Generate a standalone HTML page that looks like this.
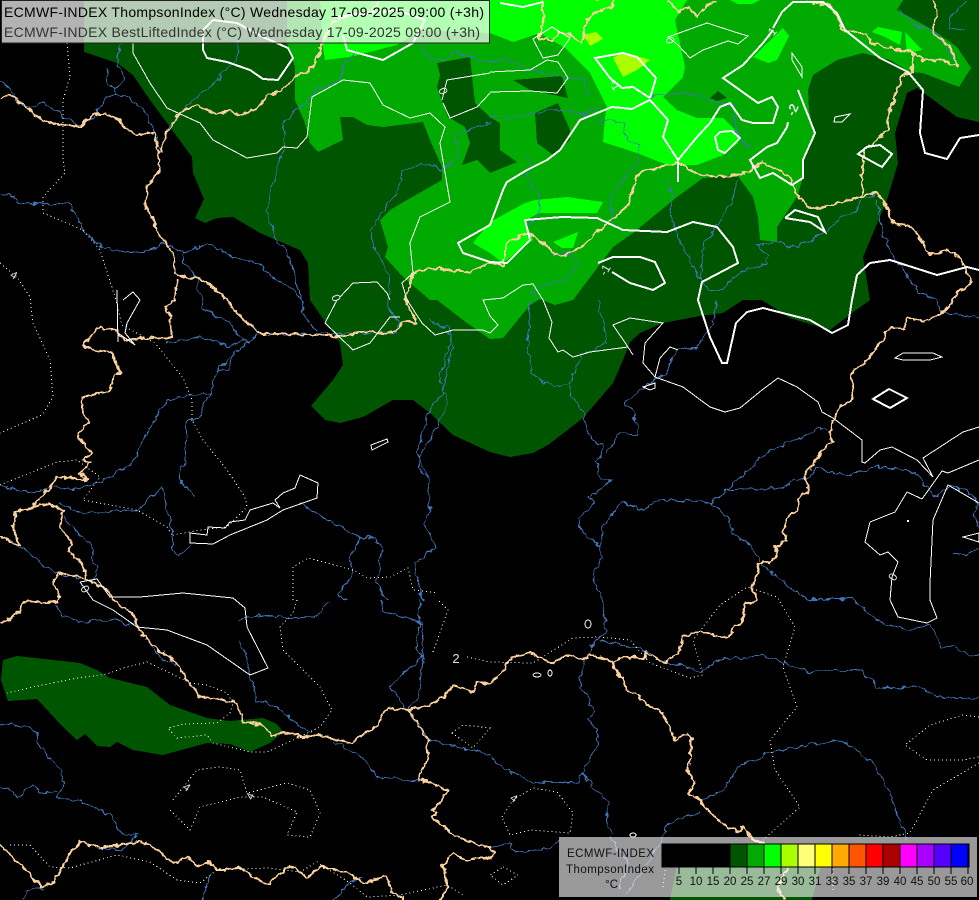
<!DOCTYPE html>
<html lang="en"><head><meta charset="utf-8"><title>ECMWF-INDEX ThompsonIndex</title>
<style>html,body{margin:0;padding:0;background:#000;width:979px;height:900px;overflow:hidden}svg{display:block}</style></head>
<body>
<svg xmlns="http://www.w3.org/2000/svg" width="979" height="900" viewBox="0 0 979 900" font-family="'Liberation Sans',sans-serif">
<defs>
<filter id="wr" filterUnits="userSpaceOnUse" x="0" y="0" width="979" height="900" color-interpolation-filters="sRGB">
<feTurbulence type="fractalNoise" baseFrequency="0.13" numOctaves="2" seed="4" result="n"/>
<feDisplacementMap in="SourceGraphic" in2="n" scale="7" xChannelSelector="R" yChannelSelector="G"/>
</filter>
<filter id="wb" filterUnits="userSpaceOnUse" x="0" y="0" width="979" height="900" color-interpolation-filters="sRGB">
<feTurbulence type="fractalNoise" baseFrequency="0.16" numOctaves="2" seed="9" result="n"/>
<feDisplacementMap in="SourceGraphic" in2="n" scale="6" xChannelSelector="R" yChannelSelector="G"/>
</filter>
</defs>
<rect width="979" height="900" fill="#000"/>
<g shape-rendering="crispEdges">
<g fill="#005500">
<polygon points="84,0 84,52 117,63 133,75 150,100 167,123 192,157 193,173 204,199 195,218 205,223 217,218 233,217 260,233 300,250 308,263 310,300 340,343 343,365 333,380 311,406 325,420 340,423 363,417 393,400 413,400 430,413 453,435 490,452 510,457 533,453 548,445 583,418 613,383 623,360 630,342 640,333 663,323 700,316 723,313 743,300 762,300 790,318 830,330 852,313 870,300 863,257 887,200 898,163 895,133 907,93 917,88 957,117 979,122 979,0"/>
<polygon points="3,660 17,656 80,663 97,670 110,678 147,687 170,705 207,718 230,721 263,718 277,724 283,732 270,743 250,752 230,744 207,743 163,755 133,750 117,742 110,747 97,746 85,734 77,740 63,727 37,699 8,701 1,680"/>
<polygon points="680,850 825,850 812,900 670,900"/>
</g>
<polygon fill="#00aa00" points="287,0 287,43 295,67 295,100 305,123 310,143 318,152 343,140 340,117 353,117 367,125 383,127 423,122 430,140 442,167 442,180 407,200 390,210 380,220 388,247 385,257 403,277 430,300 437,300 467,323 490,339 503,338 530,305 540,299 555,305 573,300 613,247 633,233 677,197 703,178 737,175 753,197 758,217 760,240 777,242 777,227 797,197 803,177 803,160 815,137 809,110 808,90 813,75 837,60 863,53 890,60 910,72 923,73 959,87 971,68 957,47 933,30 897,10 903,0"/>
<g fill="#005500">
<polygon points="437,63 470,57 475,103 490,117 500,123 500,150 517,162 490,173 477,160 462,165 470,143 465,127 448,117 437,87 440,75"/>
<polygon points="535,113 558,103 570,130 570,140 553,155 537,143"/>
<polygon points="513,80 562,76 568,98 530,90"/>
<polygon points="710,98 718,91 727,98 717,101"/>
</g>
<g fill="#00ff00">
<polygon points="320,0 323,47 325,60 350,57 397,45 420,30 490,33 513,42 540,33 565,48 590,73 607,107 605,117 603,142 637,153 667,165 697,165 723,155 738,143 738,133 723,118 697,118 677,110 663,97 683,77 685,67 675,20 687,0"/>
<polygon points="473,243 490,222 525,203 535,200 567,197 603,202 597,213 540,213 525,220 533,240 503,263 490,253"/>
<polygon points="553,242 578,232 573,248 562,248"/>
<polygon points="753,57 783,28 789,36 777,60 768,63"/>
<polygon points="872,32 878,27 902,32 900,45 885,37"/>
<polygon points="905,32 922,50 907,53"/>
<polygon points="730,0 760,0 752,4 738,4"/>
</g>
<g fill="#aaff00">
<polygon points="613,58 623,52 650,60 637,70 623,77"/>
<polygon points="583,35 596,32 603,39 590,46"/>
<polygon points="594,0 600,0 597,1"/>
</g>

<!-- rivers -->
<g fill="none" stroke="#3f74b8" stroke-width="1" filter="url(#wr)">
<polyline points="0,485 33,493 53,487 80,490 110,477 133,463 143,440 153,423 167,400 187,395 210,395 215,377 217,370 233,355 248,343 257,335"/>
<polyline points="215,372 228,368 233,355"/>
<polyline points="210,395 203,403 202,415 187,423 185,463 180,473 182,483 195,497"/>
<polyline points="167,343 200,337 230,347 248,340"/>
<polyline points="203,300 203,310 230,323 240,337 248,343"/>
<polyline points="0,82 10,87 17,102 30,107 43,102 80,127 97,113 107,95 128,97 147,113 153,128 160,150"/>
<polyline points="115,95 115,88 125,78 118,65 120,43"/>
<polyline points="107,68 107,83 115,88"/>
<polyline points="0,194 13,195 18,202 43,205 70,203 83,230 103,248 133,253 150,250 163,243 183,253 207,243 233,257 257,263 277,280 293,290 302,300 305,317 318,332"/>
<polyline points="183,253 183,263 197,277 197,290 203,300"/>
<polyline points="238,40 238,57 220,77 208,88 193,100 180,113 168,130"/>
<polyline points="357,50 345,63 340,80 317,90 312,97 297,110 283,123 285,143 277,170 267,210 273,237 287,250 297,283 302,300"/>
<polyline points="597,107 587,115 563,110 540,112 513,118 490,117"/>
<polyline points="490,122 463,133 455,135 458,157 443,170 420,163 402,173 398,190 372,227 373,245 388,273 390,313 400,320 395,333"/>
<polyline points="420,43 430,58 447,60 453,52 490,62 507,60 530,70 567,77 583,80 590,95"/>
<polyline points="650,97 683,92 703,97 733,107 737,133 750,150"/>
<polyline points="597,123 603,120 623,123 627,140 640,145 637,163 623,180 610,197 613,227"/>
<polyline points="523,157 533,163 527,177 540,197 540,213 527,227"/>
<polyline points="552,257 570,253 578,263 565,280 543,285 530,293 540,300"/>
<polyline points="530,300 528,350 533,375 555,388 570,382 572,398 585,413 585,427 590,437 602,445 602,453 597,463 600,480 612,480 590,497 595,502 578,517 583,533 600,547 602,557 593,575 603,600 607,632 595,640 583,663 580,687 588,697 595,712 588,720 597,728 598,745 590,757 577,783 533,782 510,772 490,757"/>
<polyline points="598,300 607,343 582,355 570,382"/>
<polyline points="607,453 620,433 637,435 638,427 632,408 625,407 625,402 643,388 667,372 672,357 678,350 697,347 707,333 713,323 717,300"/>
<polyline points="667,180 673,200 670,213 678,237 700,280 710,290 723,290 740,272 767,263 768,257 757,245 777,243 797,247 823,233 843,217 857,210 860,200 877,192"/>
<polyline points="735,180 733,200 720,220 703,247 700,280"/>
<polyline points="877,200 882,233 893,257 920,293 935,300 943,312 979,318"/>
<polyline points="950,17 967,0"/><polyline points="950,17 950,28 965,30"/>
<polyline points="897,10 920,28 933,30 957,63"/>
<polyline points="710,502 730,488 740,478 767,453 807,435 820,427 830,433"/>
<polyline points="728,490 783,488 793,480 807,480 817,467 847,475 877,467 917,472 922,483 937,497 948,485 970,493 979,503 973,513 979,527"/>
<polyline points="710,502 660,500 643,510 622,503 603,527 600,547"/>
<polyline points="710,502 727,517 733,533 753,548 760,563 790,587 807,600 853,598 878,622 907,630 930,625 943,648 953,645 970,657 979,655"/>
<polyline points="600,640 643,650 663,662 690,667 700,673 717,660 763,655 810,672 860,670 877,687 920,687 937,698 979,698"/>
<polyline points="582,773 608,803 607,823 612,833"/>
<polyline points="700,800 723,790 740,763 757,760 767,752 840,740 873,763 887,787 907,840"/>
<polyline points="700,813 670,822 663,837 647,863 627,893"/>
<polyline points="610,837 628,863 618,890"/>
<polyline points="490,848 510,843 515,852 550,848 558,840"/>
<polyline points="0,723 27,727 38,733 37,743 62,772 63,783 58,797 87,803 113,817 120,832 137,835 123,850 97,847"/>
<polyline points="0,788 8,787 18,798 33,785 40,793 58,792"/>
<polyline points="237,620 263,615 293,618 315,617 328,602"/>
<polyline points="55,605 63,617 80,622 113,620 133,625"/>
<polyline points="383,600 382,610 400,617 422,623 423,655 390,687 407,710"/>
<polyline points="420,600 417,647 423,657 418,700 407,710"/>
<polyline points="410,713 427,737 430,740 490,755"/>
<polyline points="240,643 245,650 257,700 277,707 300,727 312,732"/>
<polyline points="147,642 163,660 177,665"/>
<polyline points="333,742 363,757 377,777 420,782"/>
<polyline points="23,900 28,890 43,887"/>
<polyline points="210,873 203,900"/>
<polyline points="363,877 350,883 333,900"/>
<polyline points="60,503 83,513 137,510 163,487 173,537 172,550 179,557 190,545"/>
<polyline points="63,518 93,547 92,560 97,567 93,580"/>
<polyline points="8,540 20,547 43,563 53,573 83,578"/>
<polyline points="300,503 340,527 360,538 375,537 382,550 377,583 387,600"/>
<polyline points="360,538 350,557 353,573 338,595 347,600"/>
<polyline points="447,333 450,340 440,380 448,403 430,440 418,457 428,477 430,510 425,522 435,547 415,565 423,600"/>
<polyline points="430,320 447,327 453,343 443,393 428,413 418,450 420,472 428,477"/>
<polyline points="952,553 963,555 979,550"/>
<polyline points="260,334 323,334 395,332"/>
</g>

<!-- borders -->
<g fill="none" stroke="#f8cf98" stroke-width="2" stroke-linejoin="round" filter="url(#wb)">
<polyline points="0,98 10,95 27,107 43,122 80,127 93,115 105,113 117,118 125,128 138,135 155,133 158,153 159,170 147,187 145,207 153,218 160,237 173,253 175,273 183,277 197,277 213,287 227,300 240,317 260,333 323,335 340,337 360,332 393,333 403,322 417,323 405,300 408,290 413,273 433,268 470,272 490,263 503,265 507,243 527,233 543,243 560,257 580,248 603,227 627,207 638,173 677,163 700,175 723,177 747,173 763,162 790,177 798,197 810,208 823,207 857,198 877,192 885,203 893,223 913,227 923,243 930,255 947,250 960,257 967,273 972,282 957,293 952,303 940,315 923,322 907,317 905,328 890,327 875,350 867,360 852,372 852,387 852,400 840,407 833,420 830,433 832,442 823,450 815,462 805,475 808,492 798,498 798,510 787,518 783,533 788,540 775,547 777,555 770,562 758,563 758,573 752,587 758,600 757,602 745,603 742,623 733,628 728,638 700,632 683,637 680,650 665,663 645,652 645,658 623,657 613,662 603,658 590,655 582,660 570,655 550,663 530,653 513,657 507,662 505,670 490,683 477,683 473,692 453,685 443,697 430,705 408,710 387,708 377,725 360,737 352,743 317,735 303,737 283,732 272,736 263,725 243,722 237,703 213,698 200,697 187,680 177,663 147,640 137,627 135,615 123,607 113,600 107,590 87,579 82,563 68,552 72,542 60,527 63,510 50,504 32,507 15,512 13,527 20,547 8,540 0,535"/>
<polyline points="32,507 50,488 57,477 88,480 80,473 90,463 83,460 92,453 77,437 88,422 82,408 83,397 110,390 113,380 120,372 112,353 93,350 82,345 100,328 117,330 125,342 140,338 172,338 170,317 165,307 175,300 177,280"/>
<polyline points="87,579 58,573 53,583 60,597 57,602 23,602 17,615 0,623"/>
<polyline points="0,845 43,887 53,883 70,853 80,842 100,848 137,842 150,845 173,863 187,857 197,865 210,862 217,870 240,868 267,885 290,865 307,877 322,867 350,873 362,883 387,877 393,893 403,897 403,900"/>
<polyline points="440,900 448,887 443,865 453,852 465,860 490,857"/>
<polyline points="408,710 428,740 428,760 420,773 420,780 433,783 448,792 433,810 437,813 432,817 447,830 463,840 490,848 495,853 490,858"/>
<polyline points="613,662 613,668 623,680 627,690 637,695 650,707 660,710 670,727 675,740 687,733 692,737 690,760 687,770 695,783 688,793 700,800 703,807 720,822 738,832 745,827 750,837 763,843 790,865 777,888 785,900"/>
<polyline points="913,52 912,72 903,75 895,97 888,117 888,130 865,150 862,173 863,197"/>
<polyline points="807,2 830,5 837,15 843,30 867,35 870,43 890,48 913,52 923,60 943,60 958,67 950,47 933,33 937,13 933,0"/>
<polyline points="668,0 678,12 690,8 697,17 707,5 717,2"/>
<polyline points="543,0 543,23 538,38 553,40 558,33 570,35 582,43 587,20 593,13 612,7 613,0"/>
<polyline points="380,0 372,12 350,15 333,22 322,43 317,60 308,72 297,75 280,92 267,95 258,108 240,115 230,110 217,115 197,105 180,113 168,130 160,153"/>
</g>

<!-- white contours: thin -->
<g fill="none" stroke="#fff" stroke-width="1">
<polygon points="668,37 707,23 738,33 748,36 738,44 728,41 703,50 690,58 678,45"/>
<polygon points="792,53 802,67 802,77 792,60"/>
<polygon points="835,117 850,114 842,122 834,122"/>
<polyline points="490,72 530,70 547,60 558,62 568,78 557,93 530,91 490,92"/>
<polygon points="533,39 552,27 570,38 558,55 543,58"/>
<polyline points="442,100 447,80 490,73"/>
<polyline points="443,103 450,118 477,107 490,93"/>
<polyline points="133,43 133,53 150,83 167,108 200,123 213,140 247,158 277,153 283,147 297,148 307,137 312,97 343,80 370,83 383,105 410,118 430,113 445,127 440,143 450,202 420,217 410,243 413,273 402,283 407,300 422,323 435,335 453,330 483,330 490,333 498,325 490,316 483,300 503,298 523,285 533,284 543,300 552,322 549,338 558,352 563,350 573,357 590,352 628,347 633,355"/>
<polyline points="628,347 613,325 630,318 663,323 645,343 643,363 655,377 683,387 710,407 725,412 740,408 762,390 778,378 797,387 818,402 822,412 833,418 862,440 862,462 865,463 880,450 892,447 917,460 933,477"/>
<polyline points="655,377 660,358 670,347 678,350"/>
<polygon points="643,387 655,383 655,388 650,390"/>
<polyline points="933,477 923,458 963,432 979,427"/>
<polyline points="922,499 942,471 948,473 979,460"/>
<polyline points="870,522 895,512 907,492 922,499"/>
<polyline points="870,522 865,542 880,555 888,552 898,562 892,577 890,600 898,617 927,623 937,618 930,600 930,583 933,520 948,485 979,503"/>
<polygon points="963,537 979,533 979,542"/>
<polygon points="895,358 903,353 933,353 942,357 930,360 903,360"/>
<polygon points="371,445 387,439 388,442 372,450"/>
<polygon points="190,533 207,535 208,527 225,528 230,522 245,520 250,510 273,503 280,508 275,500 283,493 295,488 300,475 318,483 317,498 283,510 267,520 230,535 213,544 190,543"/>
<polyline points="117,290 118,342"/>
<polyline points="123,300 133,292 140,300 127,323 125,333 135,345 118,333"/>
<polyline points="80,582 97,579 107,593 110,597 140,597 183,593 233,598 245,608 247,627 268,668 250,675 207,645 167,630 137,627 113,610 93,600 80,582"/>
<polyline points="340,297 353,283 377,282 387,293 390,300"/>
<polyline points="337,300 325,323 353,350 370,343 390,317 400,317"/>
</g>
<!-- white contours: medium -->
<g fill="none" stroke="#fff" stroke-width="2">
<polygon points="203,50 207,58 227,62 250,70 263,79 278,80 293,58 288,48 263,37 237,23 213,20 203,30"/>
<polyline points="343,35 347,50 383,60 413,43 425,20 397,10 335,17"/>
<polyline points="773,28 782,12 793,2 823,2 837,13 845,30 880,58 908,72 923,90 920,133 925,153 947,159 960,138 979,135"/>
<polyline points="650,98 656,78 637,57 623,53 595,58 610,78 622,88 633,87 650,98"/>
<polyline points="490,225 458,243 463,253 490,262 507,263 530,240 525,220 562,217 597,218 623,230 667,232 693,222 717,227 733,247 738,263 702,282 698,300 710,337 722,363 727,363 736,323 747,312 763,308 810,320 832,333 848,325 852,300 857,275 870,263 890,260 937,275 967,267 979,270"/>
<polyline points="490,225 503,190 507,182 527,170 547,160 560,150 580,120 612,107 632,109 650,100 668,120 663,137 678,160 697,137 710,123 720,107 730,103 742,120 753,123 773,123 778,107 772,97 758,103 723,78 743,65 763,43 773,30"/>
<polyline points="678,160 678,182"/>
<polyline points="788,122 787,127 777,143 767,147 750,160 760,178 773,173 792,185 803,178 803,160 815,133 798,90"/>
<polygon points="715,137 720,132 732,131 740,138 725,153 718,150"/>
<polygon points="858,154 867,147 880,145 892,154 882,167"/>
<polyline points="598,263 613,257 640,257 655,262 665,283 653,290 630,283 612,272"/>
<polyline points="785,218 795,210 818,217 825,232 810,222 785,218"/>
<polygon points="873,399 889,389 907,398 890,408"/>
<polyline points="500,3 523,7 543,2"/>
<rect x="907" y="520" width="2" height="2" fill="#fff" stroke="none"/>
</g>
<!-- small loops -->
<g fill="none" stroke="#fff" stroke-width="1">
<ellipse cx="588" cy="624" rx="3" ry="4"/><ellipse cx="537" cy="675" rx="4" ry="2"/><ellipse cx="550" cy="673" rx="2" ry="3"/><ellipse cx="633" cy="835" rx="3" ry="2"/>
</g>
<!-- dotted -->
<g fill="none" stroke="#fff" stroke-width="1" stroke-dasharray="1 3">
<polyline points="67,43 70,77 63,100 63,160 65,173 43,197 43,213 83,230 100,250 115,297 122,325 155,343 183,378 192,400 192,420 203,440 227,470 245,497 247,507 227,527 200,530 173,535"/>
<polyline points="0,263 17,277 30,297 33,323 50,360 53,397 42,415 0,433"/>
<polyline points="0,485 57,462 77,460 100,477 83,500 137,510 167,527 173,537"/>
<polyline points="293,600 293,567 308,558 353,570 367,578 390,577 408,568 413,590 437,593"/>
<polyline points="297,600 293,613 280,627 283,650 320,687 332,710 320,727 293,740 267,752 250,752 213,743 207,735 177,738 168,728 183,724 217,723 230,713 233,703 227,693 207,685 190,683 170,673 147,662 123,668 107,674 77,678 33,687 7,693"/>
<polyline points="173,800 197,770 220,767 240,770 247,793 287,783 310,790 320,813 310,837 287,835 297,812 263,797 240,797 200,807 190,830 170,810"/>
<polyline points="10,845 30,845 50,867 70,868 117,855 150,862 177,880 200,883 217,870 267,868 300,872 317,862 350,883 367,897 400,895 447,885 463,895"/>
<polyline points="433,652 448,610 438,600"/>
<polyline points="467,657 490,662 533,663 573,638 600,637 630,640 650,663 690,678 703,675 693,640 720,605 747,587 777,597 795,627 783,667 797,707 770,740 775,770 800,807 763,840"/>
<polygon points="452,733 463,725 490,728 473,748"/>
<polygon points="503,867 518,875 503,885 490,875"/>
<polygon points="502,817 513,800 533,788 557,792 573,813 570,833 530,830 510,835"/>
<polyline points="979,717 963,715 930,725 905,745 927,760 963,760 979,757"/>
<polyline points="979,763 933,790 910,833 890,837 857,835"/>
<polyline points="833,845 833,893"/><polyline points="665,870 663,887"/>
</g>
</g>
<!-- contour labels -->
<g fill="#e4e4e4" font-size="12" text-anchor="middle">
<text x="443" y="95" transform="rotate(70 443 91)">0</text>
<text x="671" y="45" transform="rotate(70 671 40)">0</text>
<text x="336" y="302" transform="rotate(70 336 298)">0</text>
<text x="85" y="593" transform="rotate(60 85 589)">0</text>
<text x="893" y="581" transform="rotate(-60 893 577)">0</text>
<text x="456" y="663" font-size="13">2</text>
<text x="793" y="114" font-weight="bold" font-size="13" transform="rotate(-65 793 110)">-2</text>
<text x="771" y="37" transform="rotate(-50 771 33)">-1</text>
<text x="615" y="89" transform="rotate(60 615 85)">-1</text>
<text x="605" y="274" transform="rotate(-60 605 270)">-1</text>
<text x="14" y="279" font-size="11" transform="rotate(30 14 275)">4</text>
<text x="187" y="791" font-size="11" transform="rotate(35 187 787)">4</text>
<text x="250" y="800" font-size="11" transform="rotate(-65 250 796)">4</text>
<text x="514" y="802" font-size="11" transform="rotate(35 514 798)">4</text>
</g>

<!-- title panel -->
<g>
<rect x="1.5" y="0.5" width="488" height="42.5" fill="#fff" fill-opacity="0.7" stroke="#222" stroke-width="1" shape-rendering="crispEdges"/>
<text x="4" y="17" font-size="14" fill="#000" textLength="480" lengthAdjust="spacing">ECMWF-INDEX ThompsonIndex (°C) Wednesday 17-09-2025 09:00 (+3h)</text>
<text x="4" y="37" font-size="14" fill="#333" textLength="476" lengthAdjust="spacing">ECMWF-INDEX BestLiftedIndex (°C) Wednesday 17-09-2025 09:00 (+3h)</text>
</g>

<!-- legend -->
<g>
<rect x="559" y="837" width="418" height="60" fill="#fff" fill-opacity="0.6" shape-rendering="crispEdges"/>
<g shape-rendering="crispEdges">
<rect x="662" y="844" width="68" height="23" fill="#000"/>
<rect x="730" y="844" width="17" height="23" fill="#005500"/>
<rect x="747" y="844" width="17" height="23" fill="#00aa00"/>
<rect x="764" y="844" width="17" height="23" fill="#00ff00"/>
<rect x="781" y="844" width="17" height="23" fill="#aaff00"/>
<rect x="798" y="844" width="17" height="23" fill="#ffff77"/>
<rect x="815" y="844" width="17" height="23" fill="#ffff00"/>
<rect x="832" y="844" width="17" height="23" fill="#ffaa00"/>
<rect x="849" y="844" width="17" height="23" fill="#ff5500"/>
<rect x="866" y="844" width="17" height="23" fill="#ff0000"/>
<rect x="883" y="844" width="17" height="23" fill="#aa0000"/>
<rect x="900" y="844" width="17" height="23" fill="#ff00ff"/>
<rect x="917" y="844" width="17" height="23" fill="#aa00ff"/>
<rect x="934" y="844" width="17" height="23" fill="#5500ff"/>
<rect x="951" y="844" width="17" height="23" fill="#0000ff"/>
<rect x="662" y="844" width="307" height="23" fill="none" stroke="#000" stroke-width="1"/>
<path fill="none" stroke="#000" stroke-width="1" d="M679 844V874M696 844V874M713 844V874M730 844V874M747 844V874M764 844V874M781 844V874M798 844V874M815 844V874M832 844V874M849 844V874M866 844V874M883 844V874M900 844V874M917 844V874M934 844V874M951 844V874M968 844V874"/>
</g>
<g font-size="11.5" fill="#111" text-anchor="end">
<text x="654" y="857" textLength="87" lengthAdjust="spacing">ECMWF-INDEX</text>
<text x="654" y="873" textLength="88" lengthAdjust="spacing">ThompsonIndex</text>
<text x="618" y="888">°C</text>
</g>
<g font-size="11.5" fill="#111" text-anchor="middle">
<text x="679" y="885">5</text><text x="696" y="885">10</text><text x="713" y="885">15</text><text x="730" y="885">20</text><text x="747" y="885">25</text><text x="764" y="885">27</text><text x="781" y="885">29</text><text x="798" y="885">30</text><text x="815" y="885">31</text><text x="832" y="885">33</text><text x="849" y="885">35</text><text x="866" y="885">37</text><text x="883" y="885">39</text><text x="900" y="885">40</text><text x="917" y="885">45</text><text x="934" y="885">50</text><text x="951" y="885">55</text><text x="967" y="885">60</text>
</g>
</g>
</svg>
</body></html>
